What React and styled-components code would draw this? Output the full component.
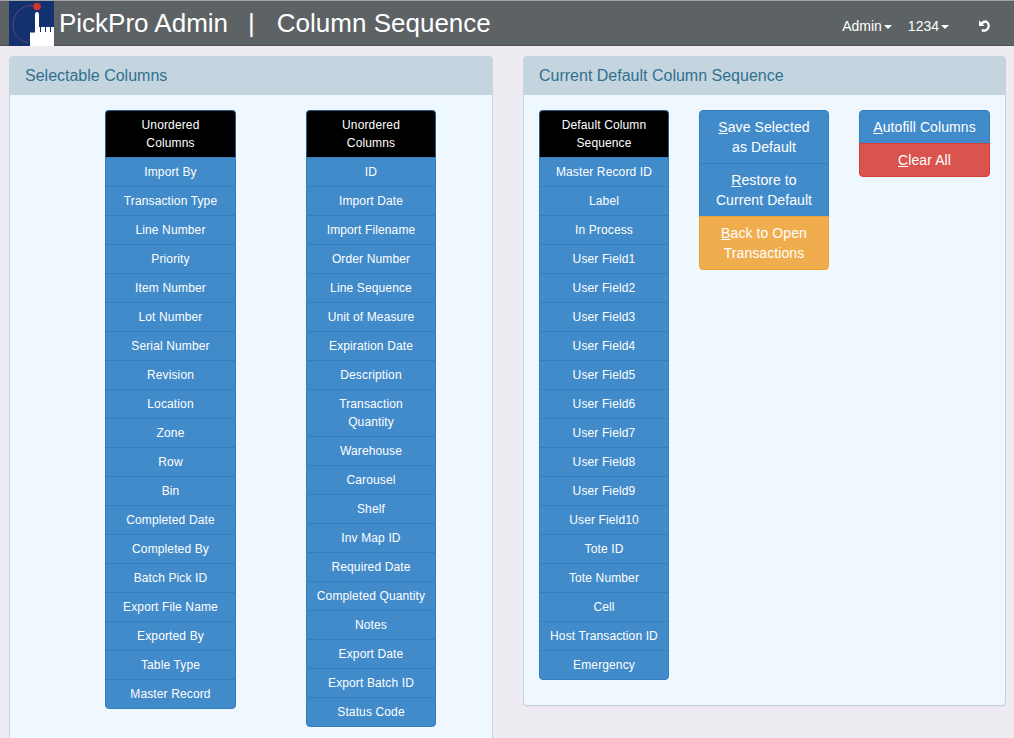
import React from 'react';
import styled, { createGlobalStyle, css } from 'styled-components';

const GlobalStyle = createGlobalStyle`
  *, *::before, *::after { box-sizing: border-box; }
  html, body { margin: 0; height: 100%; overflow: hidden; }
  body {
    background: #eeecf2;
    font-family: Arial, "Liberation Sans", sans-serif;
    font-size: 14px;
    line-height: 20px;
    color: #fff;
  }
`;

const Navbar = styled.header`
  display: flex;
  align-items: flex-start;
  height: 46px;
  padding-left: 9px;
  padding-right: 22px;
  background: #5d6265;
  border-top: 1px solid #a3a5a6;
  border-bottom: 1px solid #524f62;
`;

const Logo = styled.svg`
  display: block;
  flex: none;
  width: 45px;
  height: 45px;
`;

const Title = styled.h1`
  display: flex;
  margin: 0 0 0 5px;
  font-size: 26px;
  font-weight: 400;
  line-height: 30px;
  padding-top: 7px;
  white-space: nowrap;
`;

const Divider = styled.span`
  margin: 0 22px 0 20px;
`;

const NavMenu = styled.nav`
  display: flex;
  align-items: center;
  margin-left: auto;
  padding-top: 15px;
`;

const NavLink = styled.a`
  display: flex;
  align-items: center;
  margin-right: ${(p) => p.$gap}px;
`;

const Caret = styled.span`
  margin: 1px 0 0 2px;
  border-top: 4px solid #fff;
  border-left: 4px solid transparent;
  border-right: 4px solid transparent;
`;

const Page = styled.main`
  display: grid;
  grid-template-columns: 484px 483px;
  gap: 30px;
  align-items: start;
  padding: 10px 8px 0 9px;
  height: calc(100vh - 46px);
  overflow: hidden;
`;

const Panel = styled.section`
  background: #f0f8ff;
  border: 1px solid #c4d5df;
  border-radius: 4px;
  box-shadow: 0 1px 1px rgba(0, 0, 0, 0.05);
`;

const PanelHeading = styled.h2`
  margin: 0;
  height: 38px;
  padding: 10px 15px;
  background: #c4d5df;
  color: #31708f;
  font-size: 16px;
  font-weight: 400;
  line-height: 17.6px;
`;

const PanelBody = styled.div`
  display: grid;
  grid-template-columns: ${(p) => p.$columns};
  column-gap: ${(p) => p.$gap}px;
  align-items: start;
  padding: ${(p) => p.$padding};
`;

const ButtonGroup = styled.div`
  display: flex;
  flex-direction: column;

  > :first-child { border-radius: 4px 4px 0 0; }
  > :last-child { border-radius: 0 0 4px 4px; }
`;

const tones = {
  primary: ['#428bca', '#357ebd'],
  danger: ['#d9534f', '#d43f3a'],
  warning: ['#f0ad4e', '#eea236'],
};

const Button = styled.button`
  display: block;
  width: 100%;
  margin: 0;
  padding: 6px 8px;
  border: 1px solid ${(p) => tones[p.$tone || 'primary'][1]};
  background: ${(p) => tones[p.$tone || 'primary'][0]};
  color: #fff;
  font: 14px/20px Arial, "Liberation Sans", sans-serif;
  letter-spacing: 0.08px;
  text-align: center;
  ${(p) => p.$small && css`
    padding: 5px 8px;
    font-size: 12px;
    line-height: 18px;
    letter-spacing: 0.13px;
  `}

  * + & { margin-top: -1px; }
`;

const GroupHeader = styled.div`
  padding: 5px 10px;
  border: 1px solid #285e8e;
  border-bottom-color: #000;
  background: #000;
  font-size: 12px;
  line-height: 18px;
  letter-spacing: 0.13px;
  text-align: center;
`;

const firstColumn = ['Import By', 'Transaction Type', 'Line Number', 'Priority', 'Item Number', 'Lot Number', 'Serial Number', 'Revision', 'Location', 'Zone', 'Row', 'Bin', 'Completed Date', 'Completed By', 'Batch Pick ID', 'Export File Name', 'Exported By', 'Table Type', 'Master Record'];
const secondColumn = ['ID', 'Import Date', 'Import Filename', 'Order Number', 'Line Sequence', 'Unit of Measure', 'Expiration Date', 'Description', 'Transaction\nQuantity', 'Warehouse', 'Carousel', 'Shelf', 'Inv Map ID', 'Required Date', 'Completed Quantity', 'Notes', 'Export Date', 'Export Batch ID', 'Status Code'];
const defaultColumn = ['Master Record ID', 'Label', 'In Process', ...Array.from({ length: 10 }, (_, i) => `User Field${i + 1}`), 'Tote ID', 'Tote Number', 'Cell', 'Host Transaction ID', 'Emergency'];

const Lines = ({ text }) => text.split('\n').map((line, i) => (
  <React.Fragment key={line}>{i > 0 && <br />}{line}</React.Fragment>
));

const ColumnList = ({ title, items }) => (
  <ButtonGroup>
    <GroupHeader><Lines text={title} /></GroupHeader>
    {items.map((item) => <Button key={item} $small><Lines text={item} /></Button>)}
  </ButtonGroup>
);

export default function App() {
  return (
    <>
      <GlobalStyle />
      <Navbar>
        <Logo viewBox="0 0 45 45">
          <rect width="45" height="45" fill="#14316f" />
          <path d="M24 4.5C12 4 4 13 4 23.500C4 33 10 40.500 19 41.500" fill="none" stroke="#6b4274" strokeWidth="1" />
          <path d="M21 45V31.500H26V14Q26 11 28 11Q30 11 30 14V26H31V31H32V26H36V31H37V26H41V31H42V26H45V45Z" fill="#fff" />
          <circle cx="28" cy="5.500" r="3.800" fill="#d5342c" />
        </Logo>
        <Title>PickPro Admin<Divider>|</Divider>Column Sequence</Title>
        <NavMenu>
          <NavLink $gap={16}>Admin<Caret /></NavLink>
          <NavLink $gap={30}>1234<Caret /></NavLink>
          <svg width="13" height="13" viewBox="0 0 13 13" fill="none" stroke="#fff">
            <path d="M2.500 3.400C4 1.900 5.500 1.500 7 1.500A4.600 4.600 0 1 1 2.800 10.100" strokeWidth="2.300" />
            <path d="M0 0.300V6H5.600Z" fill="#fff" stroke="none" />
          </svg>
        </NavMenu>
      </Navbar>
      <Page>
        <Panel>
          <PanelHeading>Selectable Columns</PanelHeading>
          <PanelBody $columns="131px 130px" $gap={70} $padding="15px 15px 30px 95px">
            <ColumnList title={'Unordered\nColumns'} items={firstColumn} />
            <ColumnList title={'Unordered\nColumns'} items={secondColumn} />
          </PanelBody>
        </Panel>
        <Panel>
          <PanelHeading>Current Default Column Sequence</PanelHeading>
          <PanelBody $columns="130px 130px 131px" $gap={30} $padding="15px 15px 25px">
            <ColumnList title={'Default Column\nSequence'} items={defaultColumn} />
            <ButtonGroup>
              <Button><u>S</u>ave Selected<br />as Default</Button>
              <Button><u>R</u>estore to<br />Current Default</Button>
              <Button $tone="warning"><u>B</u>ack to Open<br />Transactions</Button>
            </ButtonGroup>
            <ButtonGroup>
              <Button><u>A</u>utofill Columns</Button>
              <Button $tone="danger"><u>C</u>lear All</Button>
            </ButtonGroup>
          </PanelBody>
        </Panel>
      </Page>
    </>
  );
}
